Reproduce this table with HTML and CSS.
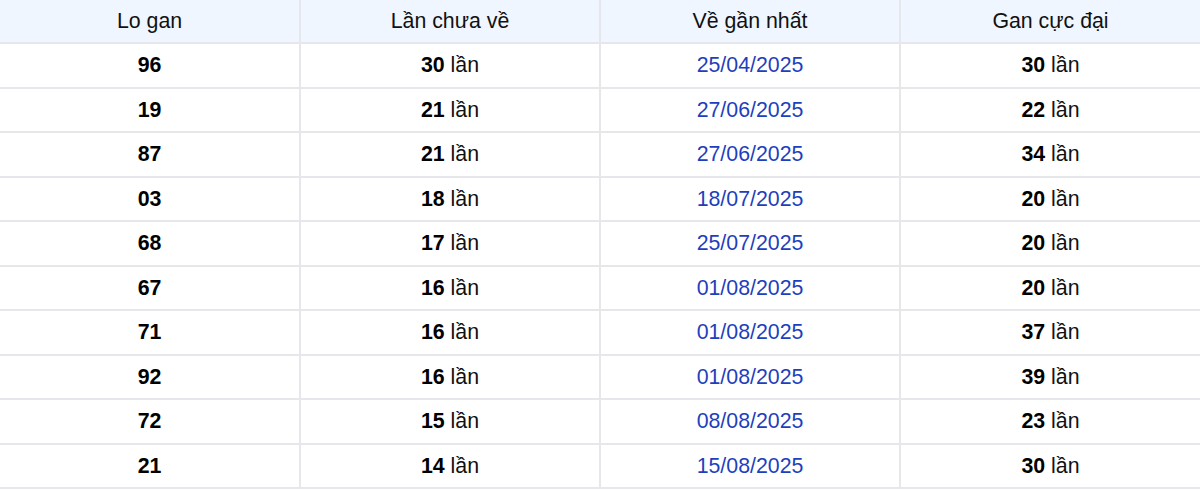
FILE: index.html
```html
<!DOCTYPE html>
<html lang="vi">
<head>
<meta charset="utf-8">
<link rel="stylesheet" href="styles.css">
</head>
<body>
<table class="gan-table">
  <thead>
    <tr><th>Lo gan</th><th>Lần chưa về</th><th>Về gần nhất</th><th>Gan cực đại</th></tr>
  </thead>
  <tbody>
    <tr><td><b>96</b></td><td><b>30</b> lần</td><td class="date">25/04/2025</td><td><b>30</b> lần</td></tr>
    <tr><td><b>19</b></td><td><b>21</b> lần</td><td class="date">27/06/2025</td><td><b>22</b> lần</td></tr>
    <tr><td><b>87</b></td><td><b>21</b> lần</td><td class="date">27/06/2025</td><td><b>34</b> lần</td></tr>
    <tr><td><b>03</b></td><td><b>18</b> lần</td><td class="date">18/07/2025</td><td><b>20</b> lần</td></tr>
    <tr><td><b>68</b></td><td><b>17</b> lần</td><td class="date">25/07/2025</td><td><b>20</b> lần</td></tr>
    <tr><td><b>67</b></td><td><b>16</b> lần</td><td class="date">01/08/2025</td><td><b>20</b> lần</td></tr>
    <tr><td><b>71</b></td><td><b>16</b> lần</td><td class="date">01/08/2025</td><td><b>37</b> lần</td></tr>
    <tr><td><b>92</b></td><td><b>16</b> lần</td><td class="date">01/08/2025</td><td><b>39</b> lần</td></tr>
    <tr><td><b>72</b></td><td><b>15</b> lần</td><td class="date">08/08/2025</td><td><b>23</b> lần</td></tr>
    <tr><td><b>21</b></td><td><b>14</b> lần</td><td class="date">15/08/2025</td><td><b>30</b> lần</td></tr>
  </tbody>
</table>
</body>
</html>
```
FILE: styles.css
```css
html, body {
  margin: 0;
  padding: 0;
  background: #ffffff;
}
body {
  font-family: "Liberation Sans", Arial, sans-serif;
  font-size: 21.33px;
  color: #111111;
}
.gan-table {
  width: 1200px;
  border-collapse: collapse;
  table-layout: fixed;
}
.gan-table th,
.gan-table td {
  border: 2px solid #e5e7eb;
  padding: 9px 8px;
  text-align: center;
  line-height: 24.45px;
}
.gan-table th {
  background: #eff6ff;
  font-weight: normal;
  border-top: none;
}
.gan-table th:first-child,
.gan-table td:first-child {
  border-left: none;
}
.gan-table th:last-child,
.gan-table td:last-child {
  border-right: none;
}
.gan-table b {
  font-weight: bold;
  color: #000000;
}
.gan-table td.date {
  color: #1e3fbd;
}
```
